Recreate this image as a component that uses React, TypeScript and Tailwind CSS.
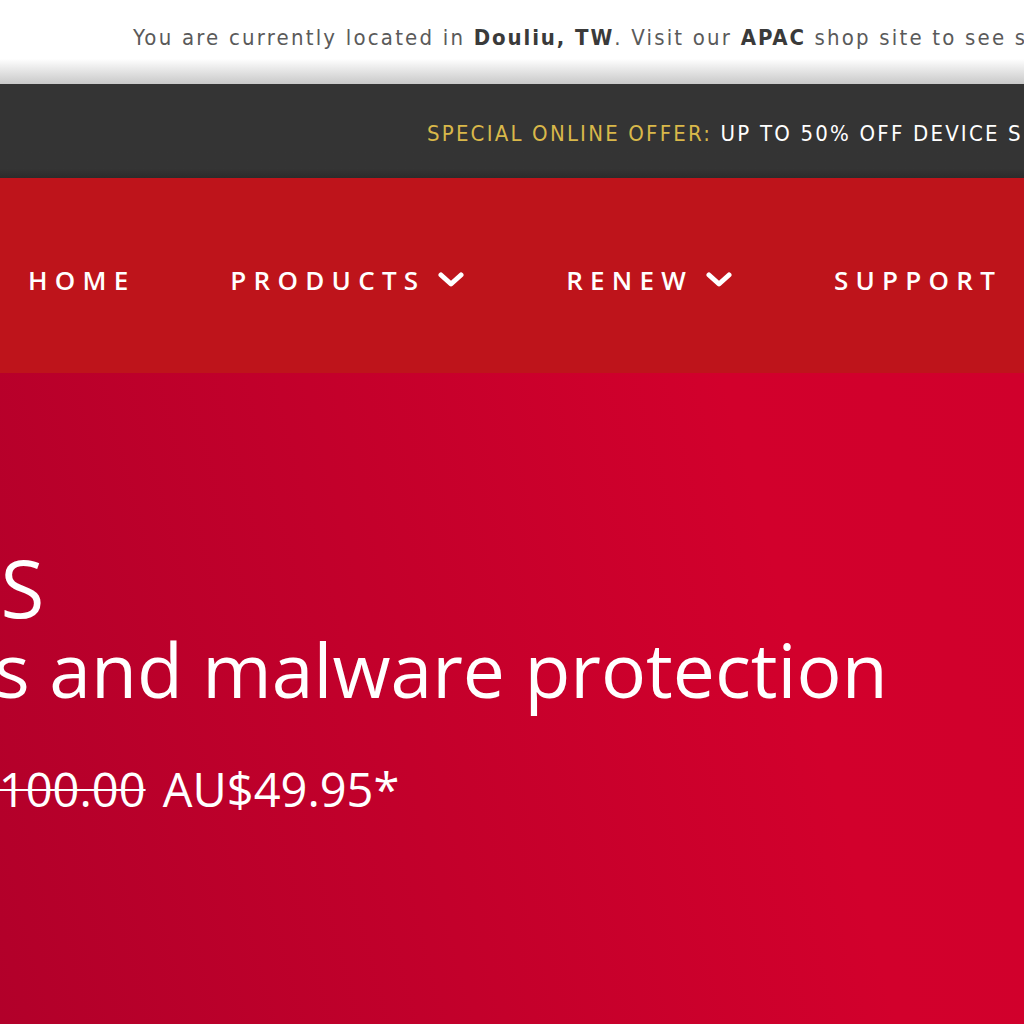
import React from 'react';

const Chevron = () => (
  <svg width="26" height="16" viewBox="0 0 26 16" className="ml-[20px] shrink-0">
    <path d="M3 3 L13 12 L23 3" fill="none" stroke="white" strokeWidth="5" strokeLinecap="round" strokeLinejoin="round" />
  </svg>
);

const navItems = [
  { label: 'HOME', menu: false },
  { label: 'PRODUCTS', menu: true },
  { label: 'RENEW', menu: true },
  { label: 'SUPPORT', menu: false },
];

export default function App() {
  return (
    <div className="w-[1024px] h-[1024px] overflow-hidden flex flex-col bg-[#c5002a]">
      {/* location notice */}
      <div className="h-[84px] shrink-0 bg-linear-to-b from-white from-70% to-[#c9c9c9] pl-[133px] pt-[21px] whitespace-nowrap overflow-hidden">
        <p className="text-[22px] leading-[34px] tracking-[2.2px] text-[#5a5a5a] font-['DejaVu_Sans_Condensed','DejaVu_Sans',sans-serif]">
          You are currently located in <span className="text-[#3a3a3a] font-semibold tracking-[1.9px]">Douliu, TW</span>. Visit our{' '}
          <span className="text-[#3a3a3a] font-semibold tracking-[1.9px]">APAC</span> shop site to see special offers in your region.
        </p>
      </div>

      {/* offer strip */}
      <div className="h-[94px] shrink-0 bg-linear-to-b from-[#343434] from-90% to-[#2b2b2b] pl-[427px] pt-[4px] flex items-center whitespace-nowrap overflow-hidden">
        <p className="text-[22px] tracking-[2.2px] font-['DejaVu_Sans_Condensed','DejaVu_Sans',sans-serif] text-white">
          <span className="text-[#d9b84a]">SPECIAL ONLINE OFFER:</span> UP TO 50% OFF DEVICE SECURITY
        </p>
      </div>

      {/* main nav */}
      <nav className="h-[195px] shrink-0 bg-[#be141b] flex items-center pl-[28px] pt-[9px] gap-[102px] whitespace-nowrap overflow-hidden">
        {navItems.map((item) => (
          <div key={item.label} className="flex items-center shrink-0">
            <span className="text-[26px] font-semibold tracking-[0.28em] text-white font-['Open_Sans',sans-serif] mr-[-0.28em]">
              {item.label}
            </span>
            {item.menu && <Chevron />}
          </div>
        ))}
      </nav>

      {/* hero */}
      <section className="flex-1 bg-[linear-gradient(75deg,#b2002a_0%,#c3002b_40%,#d2002c_75%,#d0002c_100%)] overflow-hidden whitespace-nowrap text-white font-['Open_Sans',sans-serif] pt-[172px]">
        <h1 className="text-[75px] leading-[83px] font-normal">
          <span className="block ml-[-843px] text-[80px] tracking-[2px]">McAfee AntiVirus PLUS</span>
          <span className="block ml-[-466px]">Essential virus and malware protection</span>
        </h1>
        <p className="mt-[48px] ml-[-92px] text-[47px] leading-[60px] font-normal">
          <span className="line-through decoration-2 mr-[5px]">AU$100.00</span> AU$49.95*
        </p>
      </section>
    </div>
  );
}
